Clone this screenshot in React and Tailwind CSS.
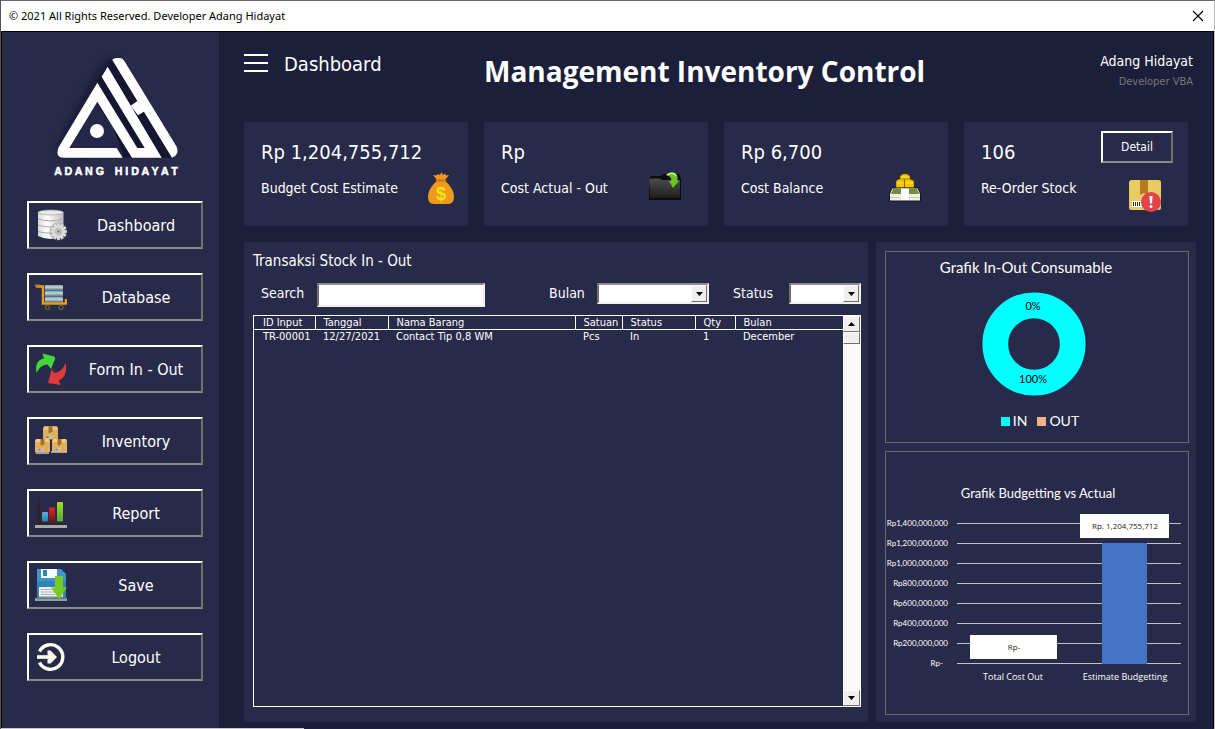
import React from "react";

const RAISED =
  "border-2 border-t-white border-l-white border-r-[#6f6f6f] border-b-[#8a8a8a] bg-[#282a49] text-white cursor-pointer";
const SUNKEN =
  "border-2 border-t-[#8c8c8c] border-l-[#6f6f6f] border-r-[#f0f0f0] border-b-[#f0f0f0] bg-white text-black";

function Logo() {
  return (
    <svg width="150" height="140" viewBox="0 0 450 420" role="img" aria-label="Adang Hidayat">
      <defs>
        <filter id="soft" x="-20%" y="-20%" width="140%" height="140%">
          <feGaussianBlur stdDeviation="13" />
        </filter>
      </defs>
      <path d="M168 95 L215 38 L240 80 L150 330 L48 325 Z" fill="#0c0d22" opacity=".7" filter="url(#soft)" />
      <path d="M172 104 L215 42 L402 338 L250 338 Z" fill="#15162f" />
      <path d="M172 170 L90 309 L230 309 L250 338 Z" fill="#24264a" />
      <g fill="#fff">
        <path d="M172 113 L55 308 Q45 338 72 338 L248 338 L230 309 L88 309 L172 170 L190 150 Z" />
        <path d="M172 113 L292 309 L314 309 L185 95 L203 65 L365 338 L276 338 L172 170 Z" />
        <path d="M217 45 Q220 39 232 39 L240 39 Q248 39 253 48 L410 305 Q420 328 396 338 Z" />
        <path d="M272 182 L292 168 L316 197 L294 211 Z" />
        <circle cx="171" cy="258" r="21" />
      </g>
      <text
        x="43"
        y="389"
        fill="#fff"
        stroke="#fff"
        strokeWidth="1.500"
        fontFamily="'Liberation Sans', sans-serif"
        fontWeight="700"
        fontSize="32"
      >
        <tspan>A D A N G</tspan>
        <tspan x="224">H I D A Y A T</tspan>
      </text>
    </svg>
  );
}

function Svg({ children }) {
  return (
    <svg width="32" height="32" viewBox="0 0 32 32" className="shrink-0" aria-hidden="true">
      {children}
    </svg>
  );
}

const teeth = [0, 30, 60, 90, 120, 150, 180, 210, 240, 270, 300, 330];

function DiskIcon() {
  return (
    <Svg>
      <defs>
        <linearGradient id="cyl">
          <stop offset="0" stopColor="#d8d8d8" />
          <stop offset=".35" stopColor="#fff" />
          <stop offset="1" stopColor="#bdbdbd" />
        </linearGradient>
      </defs>
      <path d="M3 4 V27 Q15 33 28.500 27 V4 Z" fill="url(#cyl)" />
      <ellipse cx="15.700" cy="3.500" rx="12.700" ry="2.500" fill="#e9e9e9" stroke="#a2a2a2" strokeWidth=".7" />
      <path d="M3 10 Q15 14 28.500 10 M3 16 Q15 20 28.500 16 M3 22.500 Q15 26 28.500 22" stroke="#a8a8a8" strokeWidth="1" fill="none" />
      <g fill="#e4e4e4" stroke="#858585" strokeWidth=".5">
        {teeth.map((a) => (
          <rect key={a} x="22" y="14" width="3" height="4" transform={`rotate(${a} 23.500 22.500)`} />
        ))}
      </g>
      <circle cx="23.500" cy="22.500" r="6.500" fill="#dcdcdc" />
      <circle cx="23.500" cy="22.500" r="3.200" fill="#cfcfcf" stroke="#a0a0a0" strokeWidth=".7" />
      <circle cx="23.500" cy="22.500" r="1.300" fill="#777" />
    </Svg>
  );
}

function CartIcon() {
  return (
    <Svg>
      <defs>
        <linearGradient id="roll" x2="0" y2="1">
          <stop offset="0" stopColor="#8b9daa" />
          <stop offset=".4" stopColor="#c7d2da" />
          <stop offset="1" stopColor="#566a7a" />
        </linearGradient>
      </defs>
      {[4, 10, 16].map((y) => (
        <rect key={y} x="10" y={y} width="18" height="5.500" rx="1" fill="url(#roll)" />
      ))}
      <path d="M10 9.500 H28 M10 15.500 H28" stroke="#2b7fa0" strokeWidth="1" />
      <path d="M1 5.500 H8 V22.500 H31 V18" fill="none" stroke="#dfa21a" strokeWidth="2.500" />
      <path d="M0 4.500 H5" stroke="#b97a35" strokeWidth="2" />
      {[12.5, 26].map((x) => (
        <g key={x}>
          <circle cx={x} cy="26.500" r="2.800" fill="#5d564c" />
          <circle cx={x} cy="26.500" r="1" fill="#111" />
        </g>
      ))}
    </Svg>
  );
}

function ArrowsIcon() {
  return (
    <Svg>
      <path d="M1.500 20 C0 11 3 6.500 9 5.500 L7.500 0.500 L19.500 3.500 L20 6 L16 16 L12.500 11.500 C7 12 4 15 1.500 20 Z" fill="#42d63b" />
      <path d="M30.500 10 C32.500 19 29.500 25 24 27.500 L25.500 32 L13 30 L16.500 16.500 L19.500 20 C25 19 28 16 30.500 10 Z" fill="#dd3b3b" />
    </Svg>
  );
}

function Carton({ x, y }) {
  return (
    <g transform={`translate(${x} ${y})`}>
      <path d="M1 0 H14 L15 3 V13 H0 V3 Z" fill="#dfb15e" />
      <path d="M1 0 H14 L15 3 H0 Z" fill="#edcb88" />
      <path d="M5.500 0 H9.500 V6 L8 5 L7.500 7 L5.500 6 Z" fill="#a56e25" />
      <rect x="2" y="9" width="6" height="2.800" fill="#d8d2c4" />
      <path d="M3 9.500 V11.500 M4.500 9.500 V11.500 M6 9.500 V11.500" stroke="#666" strokeWidth=".8" />
    </g>
  );
}

function CartonsIcon() {
  return (
    <Svg>
      <path d="M0 26 H14 V29 H1 Z M16 26 H32 V28 H16 Z" fill="#a3a3a3" />
      <Carton x={8} y={1.5} />
      <Carton x={0} y={14} />
      <Carton x={17} y={14} />
    </Svg>
  );
}

function BarsIcon() {
  return (
    <Svg>
      <defs>
        <linearGradient id="grn" x2="0" y2="1">
          <stop offset="0" stopColor="#a2e01d" />
          <stop offset="1" stopColor="#57a63a" />
        </linearGradient>
        <linearGradient id="red" x2="0" y2="1">
          <stop offset="0" stopColor="#d92a2a" />
          <stop offset="1" stopColor="#7c0f12" />
        </linearGradient>
        <linearGradient id="blu" x2="0" y2="1">
          <stop offset="0" stopColor="#5bb4e0" />
          <stop offset="1" stopColor="#2a7ea8" />
        </linearGradient>
      </defs>
      <path d="M2 1 H5 V26 H30 V28 H2 Z" fill="#302425" />
      <rect x="0" y="28" width="32" height="3" fill="#a8a8a8" />
      <rect x="7" y="15" width="6" height="9.500" rx="1" fill="url(#blu)" />
      <rect x="14" y="10.500" width="6" height="14" rx="1" fill="url(#red)" />
      <rect x="22" y="5" width="6" height="19.500" rx="1" fill="url(#grn)" />
    </Svg>
  );
}

function FloppyIcon() {
  return (
    <Svg>
      <rect x="0" y="29" width="32" height="3" fill="#9b9b9b" />
      <path d="M2 0 H26 L31 5 V30 H2 Z" fill="#3f95c8" />
      <path d="M2 12 H31 V30 H2 Z" fill="#2f86b4" />
      <path d="M6 0 H22 V9 H6 Z" fill="#f7f9fa" />
      <rect x="8" y="1" width="4" height="6" fill="#2f86a8" />
      <rect x="4" y="18" width="24" height="10" fill="#eef0f4" />
      <path d="M6 20.500 H20 M6 23 H20 M6 25.500 H20" stroke="#a9b3c6" strokeWidth="1" />
      <path d="M4 27.700 H28" stroke="#e4a95c" strokeWidth="1.200" />
      <path d="M20 7 H28 V18.500 H32 L24 30 L16 18.500 H20 Z" fill="#79c924" />
    </Svg>
  );
}

function LogoutIcon() {
  return (
    <Svg>
      <path d="M4.500 10.500 A12.300 12.300 0 1 1 4.500 21.500" fill="none" stroke="#fffdf2" strokeWidth="3.400" />
      <path d="M2 16 H17" stroke="#fffdf2" strokeWidth="3.600" />
      <path d="M12.500 9.500 H15.500 L22 16 L15.500 22.500 H12.500 V18.500 L15 16 L12.500 13.500 Z" fill="#fffdf2" />
    </Svg>
  );
}

function MoneyBagIcon() {
  return (
    <Svg>
      <path d="M12 8 L8 3 L11 3.500 L13 2 L15 3 L16.500 0 L18 3 L20 1.500 L21 3.500 L24 3 L20 8 Z" fill="#f39a1e" />
      <path d="M12 9 H20 C25 13 29 19 29 25 Q29 32 23 32 H9 Q3 32 3 25 C3 19 7 13 12 9 Z" fill="#ee9a1c" />
      <rect x="10.500" y="7.500" width="11" height="2" rx="1" fill="#c9731b" />
      <text x="16" y="27.500" textAnchor="middle" fontFamily="'Liberation Sans', sans-serif" fontWeight="700" fontSize="18" fill="#ffe013">
        $
      </text>
    </Svg>
  );
}

function FolderIcon() {
  return (
    <Svg>
      <defs>
        <linearGradient id="fold" x2="0" y2="1">
          <stop offset="0" stopColor="#4d4d4d" />
          <stop offset="1" stopColor="#1d1d1d" />
        </linearGradient>
      </defs>
      <path d="M0 6 L2 4 H12 L15 2 H30 L32 7 V28 H0 Z" fill="#0b0b0b" />
      <path d="M0 6.500 H11 L13 8 H31 V26 H1 Z" fill="url(#fold)" />
      <path d="M17 3 C21 -1 28 0 28.500 5 V9 H30 L24 16 L20 9 H22 C23 6 21 4 17 3 Z" fill="#6cc422" />
      <path d="M18 3 C22 0 26 1 27 4" stroke="#c9f09f" strokeWidth="1.500" fill="none" />
    </Svg>
  );
}

function CoinsIcon() {
  return (
    <Svg>
      <g fill="#f3c500" stroke="#5e4b00" strokeWidth=".5">
        <path d="M11 4 L14 2 H18 L21 4 V8 H11 Z" />
        <path d="M7 9 L10 7 H15.500 V16 H7 Z" />
        <path d="M15.500 7 H21 L25 9 V16 H15.500 Z" />
      </g>
      <path d="M8 11 H14 M17 11 H24 M12 5 H20" stroke="#ffe84a" strokeWidth="1.200" />
      <path d="M3 16 H29 L31.500 22 V29 H0.500 V22 Z" fill="#f1f1ea" stroke="#161616" strokeWidth="1" />
      <path d="M4 17 H28 L30 22 H2 Z" fill="#6f8f3c" />
      <path d="M12 16.500 H20 V28 H12 Z" fill="#fff" />
      <path d="M1 25.500 H12 M20 25.500 H31" stroke="#c9cdb8" strokeWidth="1" />
    </Svg>
  );
}

function ReorderIcon() {
  return (
    <Svg>
      <rect x="0" y="0" width="32" height="30" rx="2.500" fill="#e9cb63" />
      <path d="M11 0 H19 V15 L15 13 L11 15 Z" fill="#b57a1e" />
      <rect x="3" y="21" width="10" height="6" fill="#fff" />
      <path d="M4.500 22 V26 M6.500 22 V26 M8.500 22 V26 M10.500 22 V26" stroke="#333" strokeWidth="1" />
      <circle cx="22" cy="22" r="10" fill="#e2434a" />
      <path d="M20.500 16 H23.500 L23 23.500 H21 Z" fill="#fff" />
      <circle cx="22" cy="26.500" r="1.500" fill="#fff" />
    </Svg>
  );
}

const NAV = [
  ["Dashboard", DiskIcon],
  ["Database", CartIcon],
  ["Form In - Out", ArrowsIcon],
  ["Inventory", CartonsIcon],
  ["Report", BarsIcon],
  ["Save", FloppyIcon],
  ["Logout", LogoutIcon],
];

function Sidebar() {
  return (
    <aside className="w-[217px] shrink-0 bg-[#282a49] pt-[13px]">
      <div className="flex h-[156px] pl-[38px]">
        <Logo />
      </div>
      <nav className="flex flex-col gap-6 pr-4 pl-[25px]">
        {NAV.map(([label, Icon]) => (
          <button key={label} type="button" className={`flex h-12 items-center pl-1.5 text-base ${RAISED}`}>
            <Icon />
            <span className="flex-1 pt-0.5 pl-1 text-center">{label}</span>
          </button>
        ))}
      </nav>
    </aside>
  );
}

function Card({ value, label, icon, iconClass, children }) {
  return (
    <section className="h-[104px] min-w-0 flex-1 bg-[#282a49] pt-[9px] pl-[17px] text-white">
      <div className="flex h-[35px] items-start justify-between pr-[15px]">
        <p className="self-end text-xl leading-7 whitespace-nowrap">{value}</p>
        {children}
      </div>
      <div className="flex h-11 items-center justify-between">
        <p className="text-sm whitespace-nowrap">{label}</p>
        <div className={iconClass}>{icon}</div>
      </div>
    </section>
  );
}

function Triangle({ up }) {
  return (
    <svg width="7" height="4" viewBox="0 0 7 4" aria-hidden="true">
      <path d={up ? "M0 4 L3.500 0 L7 4 Z" : "M0 0 L3.500 4 L7 0 Z"} fill="#000" />
    </svg>
  );
}

const FACE =
  "flex items-center justify-center border border-t-white border-l-white border-r-[#6f6f6f] border-b-[#6f6f6f] bg-[#efefef]";

function Combo({ id, label, labelClass, boxClass }) {
  return (
    <div className="flex items-start">
      <label htmlFor={id} className={`text-sm leading-5 ${labelClass}`}>
        {label}
      </label>
      <div className={`relative h-[21px] ${boxClass}`}>
        <select id={id} defaultValue="" className={`h-full w-full appearance-none rounded-none ${SUNKEN}`}>
          <option value=""></option>
        </select>
        <span className={`pointer-events-none absolute top-0.5 right-0.5 bottom-0.5 w-4 ${FACE}`}>
          <Triangle />
        </span>
      </div>
    </div>
  );
}

const COLUMNS = [
  ["ID Input", "w-[61px]", "TR-00001"],
  ["Tanggal", "w-[73px]", "12/27/2021"],
  ["Nama Barang", "w-[187px]", "Contact Tip 0,8 WM"],
  ["Satuan", "w-[47px]", "Pcs"],
  ["Status", "w-[73px]", "In"],
  ["Qty", "w-[40px]", "1"],
  ["Bulan", "", "December"],
];

function Transactions() {
  return (
    <section className="flex min-w-0 flex-1 flex-col bg-[#282a49] pt-2 pr-[7px] pb-[15px] pl-[9px] text-white">
      <h2 className="text-[15px] leading-[22px]">Transaksi Stock In - Out</h2>
      <div className="mt-[11px] flex h-6 items-start pl-2">
        <label htmlFor="search" className="w-14 text-sm leading-5">
          Search
        </label>
        <input id="search" type="text" className={`h-6 w-[168px] ${SUNKEN}`} />
        <div className="ml-auto flex gap-6">
          <Combo id="bulan" label="Bulan" labelClass="w-12" boxClass="w-28" />
          <Combo id="status" label="Status" labelClass="w-14" boxClass="w-[72px]" />
        </div>
      </div>
      <div className="mt-2 flex flex-1 border border-white">
        <div className="min-w-0 flex-1">
          <table className="w-full table-fixed border-collapse text-left text-[11px] leading-[13px]">
            <thead>
              <tr className="border-b border-white">
                {COLUMNS.map(([name, width]) => (
                  <th
                    key={name}
                    className={`h-[13px] border-r border-white py-0 pr-0 pl-2 font-normal whitespace-nowrap first:pl-[9px] last:border-r-0 ${width}`}
                  >
                    {name}
                  </th>
                ))}
              </tr>
            </thead>
            <tbody>
              <tr>
                {COLUMNS.map(([name, , cell]) => (
                  <td key={name} className="py-0 pr-0 pl-2 whitespace-nowrap first:pl-[9px]">
                    {cell}
                  </td>
                ))}
              </tr>
            </tbody>
          </table>
        </div>
        <div className="flex w-[17px] flex-col bg-[#f8f8f8]">
          <button type="button" aria-label="Scroll up" className={`h-4 ${FACE}`}>
            <Triangle up />
          </button>
          <div className={`h-3 ${FACE}`} />
          <button type="button" aria-label="Scroll down" className={`mt-auto h-4 ${FACE}`}>
            <Triangle />
          </button>
        </div>
      </div>
    </section>
  );
}

const TICKS = [
  "Rp1,400,000,000",
  "Rp1,200,000,000",
  "Rp1,000,000,000",
  "Rp800,000,000",
  "Rp600,000,000",
  "Rp400,000,000",
  "Rp200,000,000",
  "Rp-",
];

function Charts() {
  return (
    <aside className="flex w-80 shrink-0 flex-col gap-2 bg-[#282a49] pt-[9px] pr-[7px] pb-[7px] pl-[9px] font-[Lato,sans-serif] text-white">
      <figure className="flex h-48 flex-col items-center border border-[#6a6a6e] pr-[6px] pt-[5px]">
        <figcaption className="pr-4 text-[15px] leading-5">Grafik In-Out Consumable</figcaption>
        <svg width="104" height="104" viewBox="0 0 104 104" className="mt-[15px]" role="img" aria-label="In 100%, Out 0%">
          <circle cx="52" cy="52" r="38.700" fill="none" stroke="#00ffff" strokeWidth="25.700" />
          <text x="51" y="18" textAnchor="middle" fontSize="11" fill="#000">0%</text>
          <text x="51" y="91" textAnchor="middle" fontSize="11" fill="#000">100%</text>
        </svg>
        <div className="mt-[15px] flex items-center gap-2.5 pl-3 text-sm leading-5">
          <span className="flex items-center gap-[3px]">
            <i className="size-[9px] bg-[#00ffff]" />
            IN
          </span>
          <span className="flex items-center gap-[3px]">
            <i className="size-[9px] bg-[#f4b183]" />
            OUT
          </span>
        </div>
      </figure>
      <figure className="flex-1 border border-[#6a6a6e]">
        <svg width="302" height="262" viewBox="0 0 302 262" role="img" aria-label="Grafik Budgetting vs Actual">
          <text x="152" y="46" textAnchor="middle" fontSize="13" fill="#fff">Grafik Budgetting vs Actual</text>
          {TICKS.map((t, i) => (
            <g key={t}>
              <line x1="71" x2="295" y1={71.5 + 20 * i} y2={71.5 + 20 * i} stroke="#c4c4c8" strokeWidth="1" />
              <text x={t === "Rp-" ? 57 : 62} y={74 + 20 * i} textAnchor="end" fontSize="8" fill="#fff">{t}</text>
            </g>
          ))}
          <rect x="216" y="91" width="45" height="121" fill="#4472c4" />
          <rect x="194" y="62" width="89" height="24" fill="#fff" />
          <rect x="84" y="183" width="87" height="24" fill="#fff" />
          <g fontFamily="'Open Sans', sans-serif">
            <text x="239" y="77" textAnchor="middle" fontSize="8" fill="#222">Rp. 1,204,755,712</text>
            <text x="128" y="198" textAnchor="middle" fontSize="8" fill="#222">Rp-</text>
            <text x="127" y="228" textAnchor="middle" fontSize="9" fill="#fff">Total Cost Out</text>
            <text x="239" y="228" textAnchor="middle" fontSize="9" fill="#fff">Estimate Budgetting</text>
          </g>
        </svg>
      </figure>
    </aside>
  );
}

export default function App() {
  return (
    <div className="flex min-h-screen flex-col border-t border-r border-l border-t-[#6b6b6b] border-r-[#bdbdbd] border-l-[#555] bg-[#1c1f39] font-['DejaVu_Sans_Condensed','Noto_Sans',sans-serif]">
      <header className="flex h-[31px] shrink-0 items-center justify-between border-b border-black bg-white pr-2.5 pl-2 font-['Noto_Sans',sans-serif] text-[11px] text-black">
        <span>© 2021 All Rights Reserved. Developer Adang Hidayat</span>
        <button type="button" aria-label="Close" className="cursor-pointer">
          <svg width="12" height="12" viewBox="0 0 12 12" aria-hidden="true">
            <path d="M1 1 L11 11 M11 1 L1 11" stroke="#000" strokeWidth="1.100" />
          </svg>
        </button>
      </header>
      <div className="flex flex-1 border-r border-l border-black">
        <Sidebar />
        <main className="flex min-w-0 flex-1 flex-col pr-[17px] pb-1.5 pl-[25px] text-white">
          <div className="flex h-[90px] shrink-0 items-start">
            <div className="flex w-60 shrink-0 items-center gap-4 pt-4">
              <button type="button" aria-label="Menu" className="flex w-6 cursor-pointer flex-col gap-[6px]">
                <i className="h-0.5 bg-white" />
                <i className="h-0.5 bg-white" />
                <i className="h-0.5 bg-white" />
              </button>
              <span className="pt-0.5 text-xl leading-7">Dashboard</span>
            </div>
            <h1 className="pt-5 font-['Open_Sans','Noto_Sans',sans-serif] text-[28px] leading-[38px] font-bold whitespace-nowrap">
              Management Inventory Control
            </h1>
            <div className="ml-auto pt-[18px] pr-[3px] text-right">
              <p className="text-sm leading-[22px]">Adang Hidayat</p>
              <p className="text-[11px] leading-5 text-[#77777d]">Developer VBA</p>
            </div>
          </div>
          <div className="mr-2 flex gap-4">
            <Card value="Rp 1,204,755,712" label="Budget Cost Estimate" icon={<MoneyBagIcon />} iconClass="mr-[11px]" />
            <Card value="Rp" label="Cost Actual - Out" icon={<FolderIcon />} iconClass="mr-[27px]" />
            <Card value="Rp 6,700" label="Cost Balance" icon={<CoinsIcon />} iconClass="mr-[27px]" />
            <Card value="106" label="Re-Order Stock" icon={<ReorderIcon />} iconClass="mr-[27px] mt-4">
              <button type="button" className={`h-8 w-[72px] text-xs ${RAISED}`}>
                Detail
              </button>
            </Card>
          </div>
          <div className="mt-4 flex flex-1 gap-2">
            <Transactions />
            <Charts />
          </div>
        </main>
      </div>
      <footer className="h-px">
        <div className="h-px w-1/4 bg-[#c8c8c8]" />
      </footer>
    </div>
  );
}
